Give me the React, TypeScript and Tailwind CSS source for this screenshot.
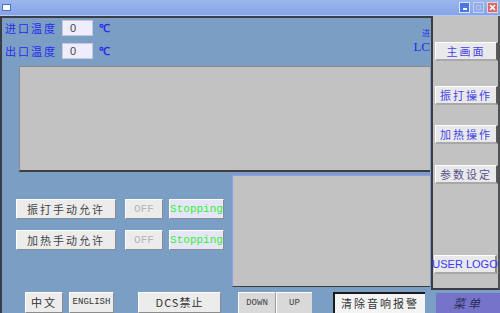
import React from 'react';

const cjk = { fontFamily: '"Noto Sans CJK SC", "Noto Sans", sans-serif' };
const mono = { fontFamily: '"Liberation Mono", "DejaVu Sans Mono", monospace' };

const MenuButton: React.FC<{ label: string; dim?: boolean }> = ({ label, dim }) => (
  <div
    className={`h-[19px] w-[63px] ml-[2px] flex items-center justify-center bg-[#e9e9ec] border-t border-l border-white border-r-2 border-b-2 border-r-[#5a5a5a] border-b-[#a8a8a8] text-[11px] tracking-[2px] leading-none ${dim ? 'text-[#55558a]' : 'text-[#4444e6]'}`}
    style={cjk}
  >
    {label}
  </div>
);

const GreyButton: React.FC<{ label: string; w: string; className?: string; font?: React.CSSProperties }> = ({ label, w, className = '', font = cjk }) => (
  <div
    className={`${w} h-[20px] flex items-center justify-center bg-[#ececec] border-t border-l border-white border-r border-b border-r-[#8c8c8c] border-b-[#8c8c8c] leading-none ${className}`}
    style={font}
  >
    {label}
  </div>
);

const StatusBox: React.FC = () => (
  <div
    className="ml-[6px] w-[55px] h-[20px] flex items-center justify-center bg-[#e6e6fb] border-t border-l border-white border-r border-b border-r-[#8c8c8c] border-b-[#8c8c8c] text-[11px] text-[#33ee33] leading-none"
    style={mono}
  >
    Stopping
  </div>
);

const TempRow: React.FC<{ label: string }> = ({ label }) => (
  <div className="flex items-center h-[16px]">
    <span className="ml-[3px] w-[57px] text-[11px] tracking-[2px] text-[#2a2aee] leading-none" style={cjk}>
      {label}
    </span>
    <div className="w-[31px] h-[16px] bg-[#eeecfd] border border-[#c8c8d8] flex items-center pl-[7px] text-[11px] text-[#444] leading-none" style={{ fontFamily: '"Liberation Sans", sans-serif' }}>
      0
    </div>
    <span className="ml-[6px] text-[11px] text-[#2a2aee] font-bold leading-none" style={{ fontFamily: '"Liberation Serif", serif' }}>
      ℃
    </span>
  </div>
);

export default function App() {
  return (
    <div className="w-[500px] h-[313px] overflow-hidden bg-[#7b9ec4] flex flex-col">
      {/* title bar */}
      <div className="h-[16px] flex items-center bg-gradient-to-b from-[#9cb6ef] to-[#86a4e6] border-b border-[#b4c8f4]">
        <div className="ml-[2px] w-[9px] h-[7px] bg-white border border-[#5070c0]" />
        <div className="ml-auto flex gap-[3px] mr-[2px]">
          <div className="w-[11px] h-[11px] bg-[#4a78e2] border border-[#dce6fb] flex items-end justify-center pb-[2px]">
            <div className="w-[4px] h-[2px] bg-white" />
          </div>
          <div className="w-[11px] h-[11px] bg-[#93abe8] border border-[#c4d2f4] flex items-center justify-center">
            <div className="w-[5px] h-[5px] border border-[#b0c2ee]" />
          </div>
          <div className="w-[11px] h-[11px] bg-[#d46a6a] border border-[#f0d0d0] flex items-center justify-center">
            <svg width="7" height="7" viewBox="0 0 7 7">
              <path d="M1 1 L6 6 M6 1 L1 6" stroke="white" strokeWidth="1.6" />
            </svg>
          </div>
        </div>
      </div>

      <div className="flex flex-1">
        {/* main area */}
        <div className="relative w-[432px] border-t-2 border-l-2 border-[#3c3c44] flex flex-col pt-[2px]">
          <TempRow label="进口温度" />
          <div className="mt-[7px]">
            <TempRow label="出口温度" />
          </div>
          <div className="absolute right-[1px] top-[11px] flex flex-col items-end text-[#2a2aee] leading-none">
            <span className="text-[8px]" style={cjk}>进</span>
            <span className="text-[13px] mt-[3px]" style={{ fontFamily: '"Liberation Serif", serif' }}>LC</span>
          </div>

          {/* big panel */}
          <div className="mt-[7px] ml-[17px] w-[411px] h-[106px] bg-[#c2c2c2] border-t border-l border-[#8a8a8a] border-b-2 border-b-[#3e3e3e]" />

          {/* middle */}
          <div className="flex">
            <div className="w-[230px] pl-[14px] pt-[27px] flex flex-col gap-[11px]">
              <div className="flex items-center">
                <GreyButton label="振打手动允许" w="w-[100px]" className="text-[11px] tracking-[2px] text-[#444]" />
                <GreyButton label="OFF" w="w-[38px] ml-[9px]" className="text-[11px] text-[#b4b4b4]" font={mono} />
                <StatusBox />
              </div>
              <div className="flex items-center">
                <GreyButton label="加热手动允许" w="w-[100px]" className="text-[11px] tracking-[2px] text-[#444]" />
                <GreyButton label="OFF" w="w-[38px] ml-[9px]" className="text-[11px] text-[#b4b4b4]" font={mono} />
                <StatusBox />
              </div>
            </div>
            <div className="mt-[3px] w-[198px] h-[112px] bg-[#c2c2c2] border-t border-l border-[#9a9af2] border-b border-b-[#3e3e3e]" />
          </div>

          {/* bottom row */}
          <div className="mt-[5px] flex items-end h-[21px]">
            <GreyButton label="中文" w="w-[38px] ml-[23px] h-[21px]" className="text-[11px] tracking-[2px] text-[#333]" />
            <GreyButton label="ENGLISH" w="w-[45px] ml-[6px] h-[21px]" className="text-[9px] text-[#333]" font={mono} />
            <GreyButton label="DCS禁止" w="w-[83px] ml-[24px] h-[21px]" className="text-[11px] text-[#333] tracking-[1px]" />
            <div className="ml-[17px] flex h-[21px]">
              <div className="w-[38px] flex items-center justify-center bg-[#d9d9d9] border-t border-l border-white border-r border-r-[#9a9a9a] text-[9px] text-[#444] leading-none" style={mono}>DOWN</div>
              <div className="w-[36px] flex items-center justify-center bg-[#d9d9d9] border-t border-l border-white text-[9px] text-[#444] leading-none" style={mono}>UP</div>
            </div>
            <div className="ml-[21px] w-[92px] h-[21px] flex items-center justify-center bg-[#f4f4f4] border-t-2 border-l-2 border-[#1a1a1a] text-[11px] tracking-[2px] text-[#333] leading-none" style={cjk}>
              清除音响报警
            </div>
          </div>
        </div>

        {/* right menu */}
        <div className="flex-1 flex flex-col">
          <div className="h-[274px] bg-[#c2c2c2] border-l-2 border-[#3c3c44] border-r-2 border-r-[#505058] border-b-2 border-b-[#3c3c44] flex flex-col pt-[26px]">
            <MenuButton label="主画面" />
            <div className="mt-[25px]"><MenuButton label="振打操作" /></div>
            <div className="mt-[20px]"><MenuButton label="加热操作" /></div>
            <div className="mt-[21px]"><MenuButton label="参数设定" dim /></div>
            <div className="mt-[71px] ml-[1px] w-[63px] h-[19px] flex items-center justify-center bg-[#e9e9ec] border-t border-l border-white border-r-2 border-b-2 border-r-[#8a8a8a] border-b-[#a8a8a8] text-[11px] text-[#3a3af2] leading-none whitespace-nowrap" style={{ fontFamily: '"Liberation Sans", Arial, sans-serif' }}>
              USER LOGO
            </div>
          </div>
          <div className="mt-[3px] ml-[5px] flex-1 bg-[#7674c8] flex items-center justify-center text-[12px] italic tracking-[3px] text-[#2c2c5c] leading-none" style={cjk}>
            菜单
          </div>
        </div>
      </div>
    </div>
  );
}
